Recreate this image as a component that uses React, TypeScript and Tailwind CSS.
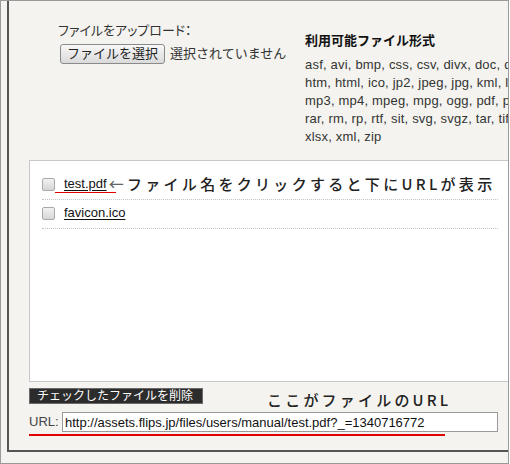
import React from 'react';

const formatLines = [
  'asf, avi, bmp, css, csv, divx, doc, docx, flv, gif, gz,',
  'htm, html, ico, jp2, jpeg, jpg, kml, lzh, mov, mp2,',
  'mp3, mp4, mpeg, mpg, ogg, pdf, png, ppt, pptx, psd,',
  'rar, rm, rp, rtf, sit, svg, svgz, tar, tif, tiff, txt, wav, xls,',
  'xlsx, xml, zip'];

const files = ['test.pdf', 'favicon.ico'];

function Checkbox() {
  return (
    <span className="inline-block w-[13px] h-[13px] shrink-0 rounded-[2px] border border-[#a9a9a9] bg-gradient-to-b from-[#f2f2f2] to-[#d6d6d6]" />);

}

export default function App() {
  return (
    <div className="w-[509px] h-[464px] overflow-hidden border border-[#9a9a9a] bg-[#f4f3ef] text-[#333] font-['Liberation_Sans','Noto_Sans_CJK_JP',sans-serif]">
      <div className="ml-[6px] w-[700px] h-[451px] border-l-2 border-b-2 border-[#555] bg-[#f4f3ef]">
        {/* upload + formats */}
        <div className="flex h-[159px]">
          <div className="ml-[49px] w-[247px] pt-[22px]">
            <div className="text-[13px] leading-[16px] [font-feature-settings:'palt']">ファイルをアップロード：</div>
            <div className="mt-[5px] ml-[2px] flex items-center gap-[5px]">
              <button className="h-[20px] px-[6px] rounded-[3px] border border-[#8a8a8a] bg-gradient-to-b from-[#f8f8f8] to-[#dadada] text-[13px] leading-[18px] text-[#222]">
                ファイルを選択
              </button>
              <span className="text-[13px] leading-[16px]">選択されていません</span>
            </div>
          </div>
          <div className="pt-[31px]">
            <div className="text-[13px] leading-[18px] font-bold text-[#111]">利用可能ファイル形式</div>
            <div className="mt-[6px] text-[13px] leading-[18px] tracking-[0.2px]">
              {formatLines.map((line) =>
              <div key={line} className="whitespace-nowrap">{line}</div>
              )}
            </div>
          </div>
        </div>

        {/* file list */}
        <div className="ml-[20px] h-[222px] border border-[#c8c8c8] bg-white pt-[10px] pl-[12px]">
          <div className="w-[456px]">
            {files.map((name, i) =>
            <div
              key={name}
              className="relative flex items-center pt-[4px] pb-[6px] border-b border-dotted border-[#c4c4c4]">
              
                <Checkbox />
                <a href="#" className="ml-[9px] text-[13px] leading-[18px] text-[#111] underline underline-offset-2">
                  {name}
                </a>
                {i === 0 &&
              <>
                    <span className="ml-[2px] whitespace-nowrap text-[15px] leading-[18px] font-medium tracking-[3.3px] text-[#222] font-['Noto_Sans_CJK_JP',sans-serif]">
                      <span className="text-[#666]">←</span>ファイル名をクリックすると下にURLが表示
                    </span>
                    <span className="absolute left-[13px] top-[21px] w-[61px] h-[1px] bg-[#e00000]" />
                  </>
              }
              </div>
            )}
          </div>
        </div>

        {/* delete + annotation */}
        <div className="ml-[20px] mt-[6px] flex items-start">
          <button className="h-[16px] w-[174px] border border-[#6a6a6a] bg-[#2c2c2c] text-left pl-[7px] text-[12px] leading-[14px] text-white">
            チェックしたファイルを削除
          </button>
          <span className="ml-[64px] mt-[3px] whitespace-nowrap text-[15px] leading-[18px] font-medium tracking-[3.2px] text-[#222] font-['Noto_Sans_CJK_JP',sans-serif]">
            ここがファイルのURL
          </span>
        </div>

        {/* url */}
        <div className="ml-[20px] mt-[3px] w-[469px]">
          <div className="flex items-center">
            <span className="w-[33px] text-[13px] leading-[16px] text-[#444]">URL:</span>
            <input
              readOnly
              value="http://assets.flips.jp/files/users/manual/test.pdf?_=1340716772"
              className="h-[20px] w-[436px] border border-[#9a9a9a] bg-white px-[2px] text-[13px] text-[#111] outline-none" />
            
          </div>
          <div className="mt-[2px] w-[416px] h-[2px] bg-[#e00000]" />
        </div>
      </div>
    </div>);

}
